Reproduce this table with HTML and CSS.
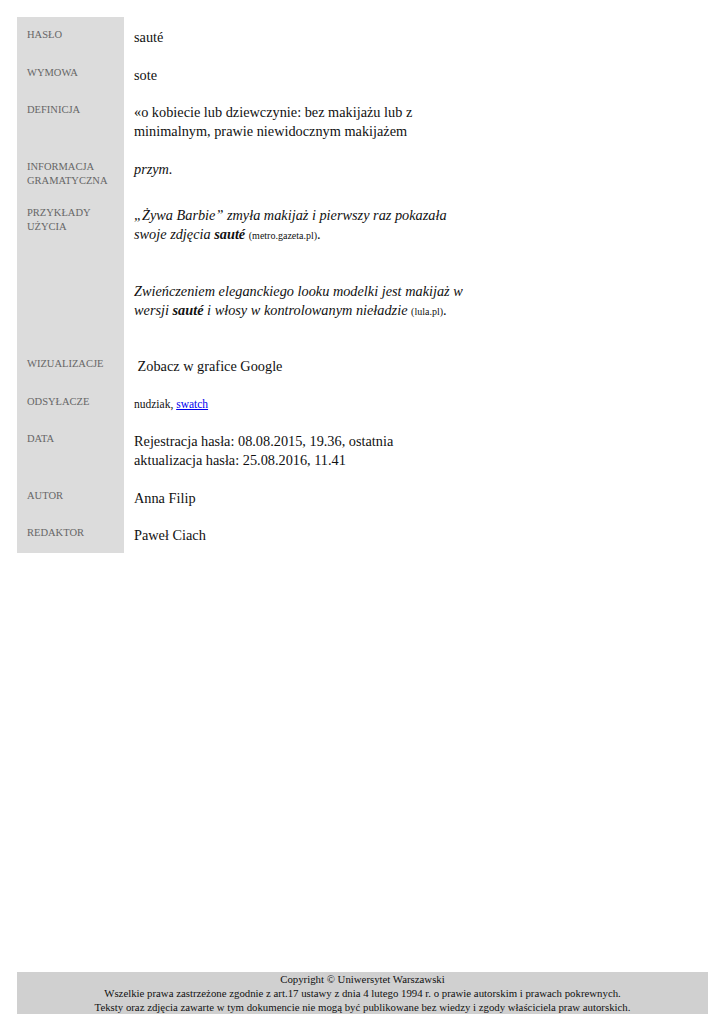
FILE: index.html
```html
<!DOCTYPE html>
<html lang="pl">
<head>
    <meta charset="UTF-8">
    <meta name="viewport" content="width=device-width, initial-scale=1.0">
    <title>sauté</title>
    <link rel="stylesheet" href="styles.css">
</head>

<body>

<div class="page">
  <table class="entry">
    <tbody>
      <tr>
        <th>Hasło</th>
        <td>sauté</td>
      </tr>
      <tr>
        <th>Wymowa</th>
        <td>sote</td>
      </tr>
      <tr>
        <th>Definicja</th>
        <td>«o kobiecie lub dziewczynie: bez makijażu lub z minimalnym, prawie niewidocznym makijażem</td>
      </tr>
      <tr>
        <th>Informacja gramatyczna</th>
        <td><i>przym.</i></td>
      </tr>
      <tr>
        <th>Przykłady użycia</th>
        <td>
          <p class="example"><i>„Żywa Barbie” zmyła makijaż i pierwszy raz pokazała swoje zdjęcia <b>sauté</b></i> <span class="source">(metro.gazeta.pl)</span>.</p>
          <p class="example"><i>Zwieńczeniem eleganckiego looku modelki jest makijaż w wersji <b>sauté</b> i włosy w kontrolowanym nieładzie</i> <span class="source">(lula.pl)</span>.</p>
        </td>
      </tr>
      <tr>
        <th>Wizualizacje</th>
        <td>&nbsp;Zobacz w grafice Google</td>
      </tr>
      <tr>
        <th>Odsyłacze</th>
        <td class="refs">nudziak, <a href="#">swatch</a></td>
      </tr>
      <tr>
        <th>Data</th>
        <td>Rejestracja hasła: 08.08.2015, 19.36, ostatnia aktualizacja hasła: 25.08.2016, 11.41</td>
      </tr>
      <tr>
        <th>Autor</th>
        <td>Anna Filip</td>
      </tr>
      <tr>
        <th>Redaktor</th>
        <td>Paweł Ciach</td>
      </tr>
    </tbody>
  </table>

  <div class="footer">
    Copyright © Uniwersytet Warszawski<br>
    Wszelkie prawa zastrzeżone zgodnie z art.17 ustawy z dnia 4 lutego 1994 r. o prawie autorskim i prawach pokrewnych.<br>
    Teksty oraz zdjęcia zawarte w tym dokumencie nie mogą być publikowane bez wiedzy i zgody właściciela praw autorskich.
  </div>
</div>

</body>
</html>
```

FILE: styles.css
```css
body {
    font-family: "Liberation Serif", "Times New Roman", serif;
    background-color: #fff;
    color: #111;
    margin: 0;
    padding: 0;
}

.page {
    display: flex;
    flex-direction: column;
    align-items: flex-start;
    min-height: 1024px;
    box-sizing: border-box;
    padding: 17px 17px 10px;
}

.entry {
    border-collapse: collapse;
    border-spacing: 0;
}

.entry th,
.entry td {
    vertical-align: top;
    padding: 11px 10px 7.5px;
    text-align: left;
}

.entry th {
    width: 87px;
    background-color: #dcdcdc;
    color: #666;
    font-size: 10.5px;
    font-weight: normal;
    line-height: 14px;
    text-transform: uppercase;
}

.entry td {
    width: 330px;
    font-size: 14.3px;
    line-height: 19px;
}

.entry td.refs {
    font-size: 11.5px;
}

.example {
    margin: 0 0 37px;
}

.example:last-child {
    margin-bottom: 17.5px;
}

.source {
    font-size: 10px;
}

a {
    color: #0000ee;
}

.footer {
    align-self: stretch;
    margin-top: auto;
    background-color: #d0d0d0;
    color: #111;
    font-size: 10.8px;
    line-height: 14px;
    text-align: center;
}
```
